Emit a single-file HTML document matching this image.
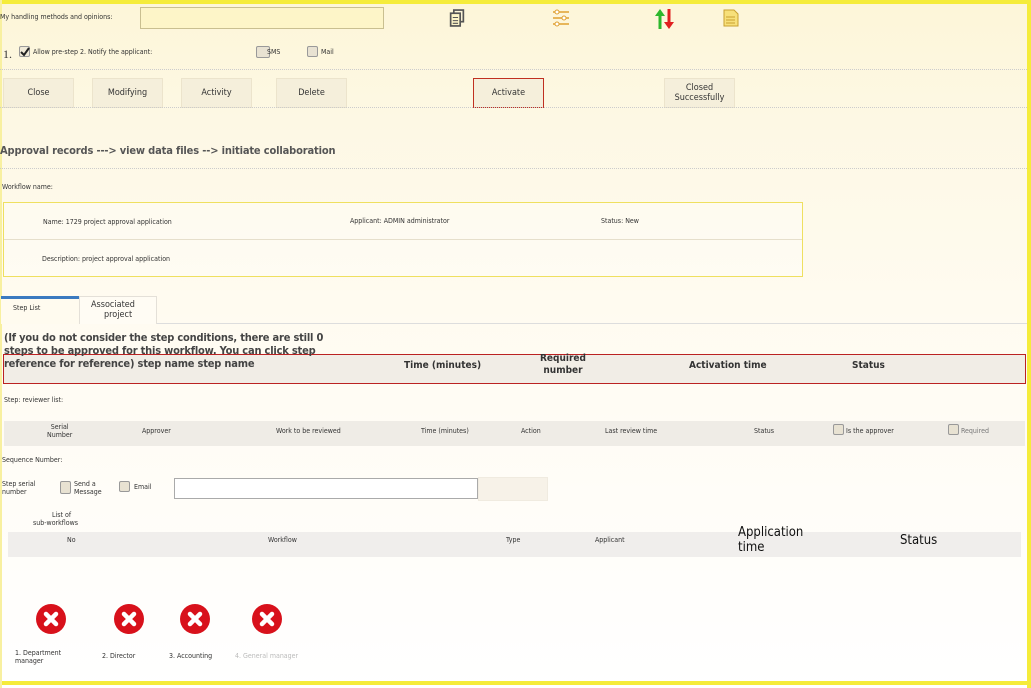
<!DOCTYPE html>
<html><head><meta charset="utf-8"><style>
*{margin:0;padding:0;box-sizing:border-box}
body{width:1031px;height:688px;overflow:hidden;font-family:"DejaVu Sans Condensed","DejaVu Sans","Liberation Sans",sans-serif;color:#333;position:relative;
background:linear-gradient(180deg,#fdf6d8 0px,#fdf8e4 120px,#fffbf0 300px,#fffdf8 500px,#fff 688px);}
.a{position:absolute;white-space:nowrap}
.s{font-size:7px}
.btn{position:absolute;top:78px;height:30px;background:#f5efdb;border:1px solid #ece4cc;font-size:9px;display:flex;align-items:center;justify-content:center;text-align:center;line-height:10px;color:#333}
.hr{position:absolute;left:0;right:4px;border-top:1px dotted #ccc}
.cb{position:absolute;width:11px;height:11px;border:1px solid #999;border-radius:2px;background:#e8e2d2}
.x{position:absolute;top:604px;width:30px;height:30px;border-radius:50%;background:#d8111b}
</style></head><body>
<div class="a" style="left:0;top:0;width:1031px;height:4px;background:#f5ec3a"></div>
<div class="a" style="right:0;top:0;width:4px;height:688px;background:#f5ec3a"></div>
<div class="a" style="left:0;top:681px;width:1031px;height:4px;background:#f5ec3a"></div>
<div class="a" style="left:0;top:0;width:2px;height:688px;background:#f8f0a0"></div>

<div class="a s" style="left:0;top:13px">My handling methods and opinions:</div>
<div class="a" style="left:140px;top:7px;width:244px;height:22px;background:#fdf5c8;border:1px solid #c9bf90"></div>
<svg class="a" style="left:448px;top:9px" width="18" height="18" viewBox="0 0 16 17"><rect x="5" y="1" width="9" height="11" fill="none" stroke="#555" stroke-width="1.6"/><rect x="2" y="4" width="9" height="12" fill="#fdf5c8" stroke="#555" stroke-width="1.6"/><path d="M4 8h5M4 11h5M4 13.5h5" stroke="#555"/></svg>
<svg class="a" style="left:552px;top:9px" width="18" height="18"><path d="M1 3h16M1 9h16M1 15h16" stroke="#e0a030" stroke-width="1.6"/><circle cx="5" cy="3" r="2" fill="#fff" stroke="#e0a030"/><circle cx="12" cy="9" r="2" fill="#fff" stroke="#e0a030"/><circle cx="5" cy="15" r="2" fill="#fff" stroke="#e0a030"/></svg>
<svg class="a" style="left:655px;top:9px" width="20" height="20"><path d="M5 0L0 7h3.5v13h3V7H10z" fill="#2db82d"/><path d="M14 20l5-7h-3.5V0h-3v13H9z" fill="#e02020"/></svg>
<svg class="a" style="left:723px;top:9px" width="16" height="18"><path d="M1 1h10l4 4v12H1z" fill="#f7e07a" stroke="#c8a030"/><path d="M3 8h9M3 11h9M3 14h9" stroke="#c8a030"/></svg>

<div class="a" style="left:3px;top:47px;font:12px 'Liberation Serif',serif">1.</div>
<div class="cb" style="left:19px;top:46px;background:#f0ead8"><svg width="10" height="10" style="position:absolute;left:0;top:0"><path d="M1 5l3 3 5-7" stroke="#222" stroke-width="2" fill="none"/></svg></div>
<div class="a s" style="left:33px;top:48px">Allow pre-step 2. Notify the applicant:</div>
<div class="cb" style="left:256px;top:46px;width:14px;height:12px"></div><div class="a s" style="left:267px;top:48px">SMS</div>
<div class="cb" style="left:307px;top:46px"></div><div class="a s" style="left:321px;top:48px">Mail</div>
<div class="hr" style="top:69px"></div>

<div class="btn" style="left:3px;width:71px">Close</div>
<div class="btn" style="left:92px;width:71px">Modifying</div>
<div class="btn" style="left:181px;width:71px">Activity</div>
<div class="btn" style="left:276px;width:71px">Delete</div>
<div class="btn" style="left:473px;width:71px;border:1px solid #c03020">Activate</div>
<div class="btn" style="left:664px;width:71px">Closed<br>Successfully</div>
<div class="hr" style="top:107px"></div>

<div class="a" style="left:0;top:144px;font-size:11px;font-weight:bold;color:#555;letter-spacing:-0.15px">Approval records ---&gt; view data files --&gt; initiate collaboration</div>
<div class="hr" style="top:168px"></div>
<div class="a s" style="left:2px;top:183px">Workflow name:</div>
<div class="a" style="left:3px;top:202px;width:800px;height:75px;border:1px solid #efe060;background:rgba(255,255,255,.3)"></div>
<div class="a" style="left:4px;top:239px;width:798px;border-top:1px solid #e6dfcc"></div>
<div class="a s" style="left:43px;top:218px">Name: 1729 project approval application</div>
<div class="a s" style="left:350px;top:217px">Applicant: ADMIN administrator</div>
<div class="a s" style="left:601px;top:217px">Status: New</div>
<div class="a s" style="left:42px;top:255px">Description: project approval application</div>

<div class="a" style="left:1px;top:296px;width:78px;height:28px;border-top:3px solid #3b7ac0;background:#fffbef"></div>
<div class="a s" style="left:13px;top:304px">Step List</div>
<div class="a" style="left:79px;top:296px;width:78px;height:28px;border:1px solid #e4e0d8;border-bottom:none;background:#fffcf4"></div>
<div class="a" style="left:91px;top:300px;font-size:9px;text-align:center;line-height:10px">Associated<br>&nbsp;&nbsp;&nbsp;&nbsp;project</div>
<div class="a" style="left:157px;top:323px;width:870px;border-top:1px solid #ddd"></div>

<div class="a" style="left:3px;top:354px;width:1023px;height:30px;border:1px solid #b22;background:#f1ede6"></div>
<div class="a" style="left:4px;top:331px;font-size:11px;font-weight:bold;line-height:13px;color:#444;letter-spacing:-0.2px">(If you do not consider the step conditions, there are still 0<br>steps to be approved for this workflow. You can click step<br>reference for reference) step name step name</div>
<div class="a" style="left:404px;top:360px;font-size:10px;font-weight:bold">Time (minutes)</div>
<div class="a" style="left:540px;top:353px;font-size:10px;font-weight:bold;text-align:center;line-height:12px">Required<br>number</div>
<div class="a" style="left:689px;top:360px;font-size:10px;font-weight:bold">Activation time</div>
<div class="a" style="left:852px;top:360px;font-size:10px;font-weight:bold">Status</div>

<div class="a s" style="left:4px;top:396px">Step: reviewer list:</div>
<div class="a" style="left:4px;top:421px;width:1021px;height:25px;background:#efece6"></div>
<div class="a s" style="left:47px;top:423px;text-align:center;line-height:8px">Serial<br>Number</div>
<div class="a s" style="left:142px;top:427px">Approver</div>
<div class="a s" style="left:276px;top:427px">Work to be reviewed</div>
<div class="a s" style="left:421px;top:427px">Time (minutes)</div>
<div class="a s" style="left:521px;top:427px">Action</div>
<div class="a s" style="left:605px;top:427px">Last review time</div>
<div class="a s" style="left:754px;top:427px">Status</div>
<div class="cb" style="left:833px;top:424px"></div><div class="a s" style="left:846px;top:427px">Is the approver</div>
<div class="cb" style="left:948px;top:424px"></div><div class="a s" style="left:961px;top:427px;color:#777">Required</div>

<div class="a s" style="left:2px;top:456px">Sequence Number:</div>
<div class="a s" style="left:2px;top:480px;line-height:8px">Step serial<br>number</div>
<div class="cb" style="left:60px;top:481px;height:13px"></div>
<div class="a s" style="left:74px;top:480px;line-height:8px">Send a<br>Message</div>
<div class="cb" style="left:119px;top:481px"></div><div class="a s" style="left:134px;top:483px">Email</div>
<div class="a" style="left:174px;top:478px;width:304px;height:21px;background:#fff;border:1px solid #aaa"></div>
<div class="a" style="left:478px;top:477px;width:70px;height:24px;background:#f7f2e8;border:1px solid #f0ebe0"></div>

<div class="a s" style="left:33px;top:511px;text-align:center;line-height:8px">&nbsp;&nbsp;&nbsp;&nbsp;&nbsp;&nbsp;List of<br>sub-workflows</div>
<div class="a" style="left:8px;top:532px;width:1013px;height:25px;background:#f0eeec"></div>
<div class="a s" style="left:67px;top:536px">No</div>
<div class="a s" style="left:268px;top:536px">Workflow</div>
<div class="a s" style="left:506px;top:536px">Type</div>
<div class="a s" style="left:595px;top:536px">Applicant</div>
<div class="a" style="left:738px;top:525px;font-size:13px;line-height:15px;color:#111">Application<br>time</div>
<div class="a" style="left:900px;top:533px;font-size:13px;color:#111">Status</div>

<div class="x" style="left:36px"><svg width="30" height="30"><path d="M10 10l10 10M20 10L10 20" stroke="#fff" stroke-width="4.5" stroke-linecap="round"/></svg></div>
<div class="x" style="left:114px"><svg width="30" height="30"><path d="M10 10l10 10M20 10L10 20" stroke="#fff" stroke-width="4.5" stroke-linecap="round"/></svg></div>
<div class="x" style="left:180px"><svg width="30" height="30"><path d="M10 10l10 10M20 10L10 20" stroke="#fff" stroke-width="4.5" stroke-linecap="round"/></svg></div>
<div class="x" style="left:252px"><svg width="30" height="30"><path d="M10 10l10 10M20 10L10 20" stroke="#fff" stroke-width="4.5" stroke-linecap="round"/></svg></div>
<div class="a s" style="left:15px;top:649px;line-height:8px">1. Department<br>manager</div>
<div class="a s" style="left:102px;top:652px">2. Director</div>
<div class="a s" style="left:169px;top:652px">3. Accounting</div>
<div class="a s" style="left:235px;top:652px;color:#bbb">4. General manager</div>
</body></html>
